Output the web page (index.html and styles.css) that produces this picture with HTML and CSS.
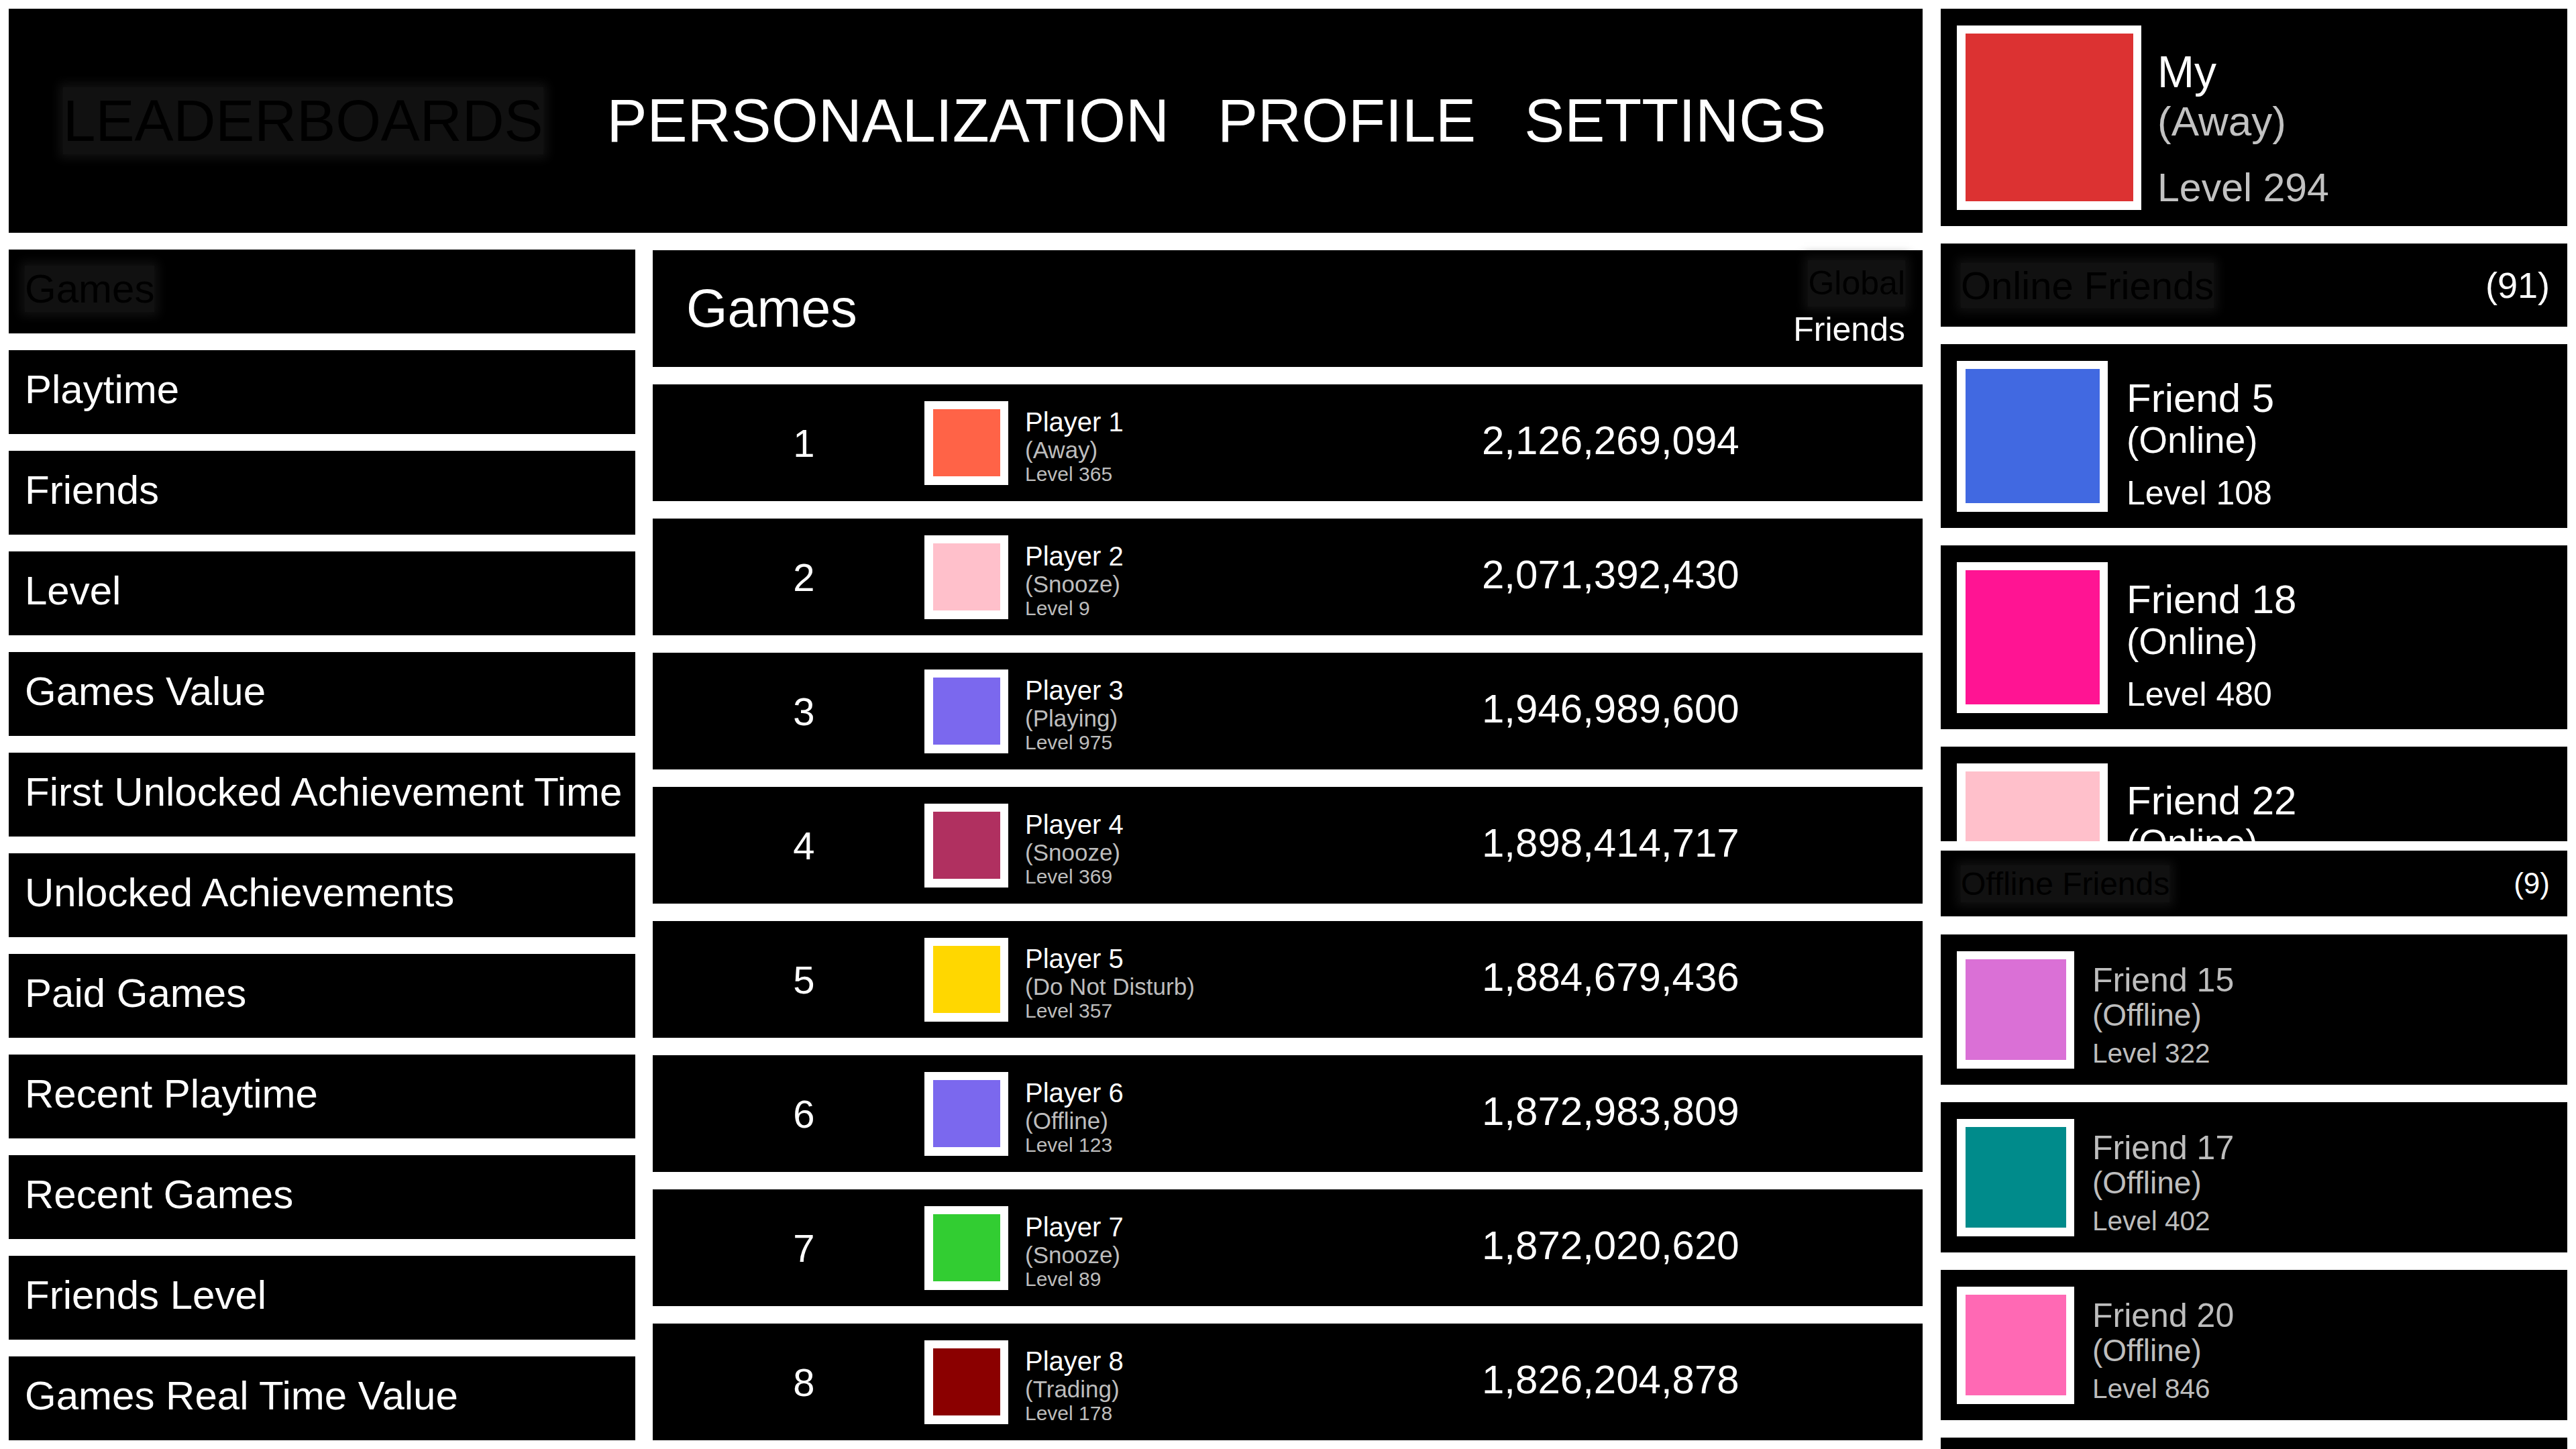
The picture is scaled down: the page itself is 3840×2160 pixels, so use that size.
FILE: index.html
```html
<!DOCTYPE html>
<html lang="en">
<head>
<meta charset="utf-8">
<title>Leaderboards</title>
<link rel="stylesheet" href="styles.css">
</head>
<body>
<div class="app">
  <div class="main">
    <header class="topbar">
      <nav class="tabs">
        <span class="tab active">LEADERBOARDS</span>
        <span class="tab">PERSONALIZATION</span>
        <span class="tab">PROFILE</span>
        <span class="tab">SETTINGS</span>
      </nav>
    </header>
    <div class="content">
      <aside class="categories">
        <div class="cat active"><span class="cat-label">Games</span></div>
        <div class="cat"><span class="cat-label">Playtime</span></div>
        <div class="cat"><span class="cat-label">Friends</span></div>
        <div class="cat"><span class="cat-label">Level</span></div>
        <div class="cat"><span class="cat-label">Games Value</span></div>
        <div class="cat"><span class="cat-label">First Unlocked Achievement Time</span></div>
        <div class="cat"><span class="cat-label">Unlocked Achievements</span></div>
        <div class="cat"><span class="cat-label">Paid Games</span></div>
        <div class="cat"><span class="cat-label">Recent Playtime</span></div>
        <div class="cat"><span class="cat-label">Recent Games</span></div>
        <div class="cat"><span class="cat-label">Friends Level</span></div>
        <div class="cat"><span class="cat-label">Games Real Time Value</span></div>
      </aside>
      <section class="board">
        <div class="board-head">
          <h1 class="board-title">Games</h1>
          <div class="scope">
            <span class="scope-opt active">Global</span>
            <span class="scope-opt">Friends</span>
          </div>
        </div>
        <div class="row">
          <div class="rank">1</div>
          <div class="player">
            <div class="avatar sm"><div class="fill" style="background:#ff6347"></div></div>
            <div class="pinfo"><div class="pname">Player 1</div><div class="pstatus">(Away)</div><div class="plevel">Level 365</div></div>
          </div>
          <div class="score">2,126,269,094</div>
        </div>
        <div class="row">
          <div class="rank">2</div>
          <div class="player">
            <div class="avatar sm"><div class="fill" style="background:#ffc0cb"></div></div>
            <div class="pinfo"><div class="pname">Player 2</div><div class="pstatus">(Snooze)</div><div class="plevel">Level 9</div></div>
          </div>
          <div class="score">2,071,392,430</div>
        </div>
        <div class="row">
          <div class="rank">3</div>
          <div class="player">
            <div class="avatar sm"><div class="fill" style="background:#7b68ee"></div></div>
            <div class="pinfo"><div class="pname">Player 3</div><div class="pstatus">(Playing)</div><div class="plevel">Level 975</div></div>
          </div>
          <div class="score">1,946,989,600</div>
        </div>
        <div class="row">
          <div class="rank">4</div>
          <div class="player">
            <div class="avatar sm"><div class="fill" style="background:#b03060"></div></div>
            <div class="pinfo"><div class="pname">Player 4</div><div class="pstatus">(Snooze)</div><div class="plevel">Level 369</div></div>
          </div>
          <div class="score">1,898,414,717</div>
        </div>
        <div class="row">
          <div class="rank">5</div>
          <div class="player">
            <div class="avatar sm"><div class="fill" style="background:#ffd700"></div></div>
            <div class="pinfo"><div class="pname">Player 5</div><div class="pstatus">(Do Not Disturb)</div><div class="plevel">Level 357</div></div>
          </div>
          <div class="score">1,884,679,436</div>
        </div>
        <div class="row">
          <div class="rank">6</div>
          <div class="player">
            <div class="avatar sm"><div class="fill" style="background:#7b68ee"></div></div>
            <div class="pinfo"><div class="pname">Player 6</div><div class="pstatus">(Offline)</div><div class="plevel">Level 123</div></div>
          </div>
          <div class="score">1,872,983,809</div>
        </div>
        <div class="row">
          <div class="rank">7</div>
          <div class="player">
            <div class="avatar sm"><div class="fill" style="background:#32cd32"></div></div>
            <div class="pinfo"><div class="pname">Player 7</div><div class="pstatus">(Snooze)</div><div class="plevel">Level 89</div></div>
          </div>
          <div class="score">1,872,020,620</div>
        </div>
        <div class="row">
          <div class="rank">8</div>
          <div class="player">
            <div class="avatar sm"><div class="fill" style="background:#8b0000"></div></div>
            <div class="pinfo"><div class="pname">Player 8</div><div class="pstatus">(Trading)</div><div class="plevel">Level 178</div></div>
          </div>
          <div class="score">1,826,204,878</div>
        </div>
      </section>
    </div>
  </div>
  <aside class="side">
    <div class="me">
      <div class="avatar lg"><div class="fill" style="background:#dc3232"></div></div>
      <div class="me-info">
        <div class="me-name">My</div>
        <div class="me-status">(Away)</div>
        <div class="me-level">Level 294</div>
      </div>
    </div>
    <div class="list-head online-head">
      <span class="list-title">Online Friends</span>
      <span class="list-count">(91)</span>
    </div>
    <div class="friends online">
      <div class="friend">
        <div class="avatar md"><div class="fill" style="background:#4169e1"></div></div>
        <div class="finfo"><div class="fname">Friend 5</div><div class="fstatus">(Online)</div><div class="flevel">Level 108</div></div>
      </div>
      <div class="friend">
        <div class="avatar md"><div class="fill" style="background:#ff1493"></div></div>
        <div class="finfo"><div class="fname">Friend 18</div><div class="fstatus">(Online)</div><div class="flevel">Level 480</div></div>
      </div>
      <div class="friend">
        <div class="avatar md"><div class="fill" style="background:#ffc0cb"></div></div>
        <div class="finfo"><div class="fname">Friend 22</div><div class="fstatus">(Online)</div><div class="flevel">Level 213</div></div>
      </div>
    </div>
    <div class="list-head offline-head">
      <span class="list-title">Offline Friends</span>
      <span class="list-count">(9)</span>
    </div>
    <div class="friends offline">
      <div class="friend off">
        <div class="avatar xs"><div class="fill" style="background:#da70d6"></div></div>
        <div class="finfo"><div class="fname">Friend 15</div><div class="fstatus">(Offline)</div><div class="flevel">Level 322</div></div>
      </div>
      <div class="friend off">
        <div class="avatar xs"><div class="fill" style="background:#008b8b"></div></div>
        <div class="finfo"><div class="fname">Friend 17</div><div class="fstatus">(Offline)</div><div class="flevel">Level 402</div></div>
      </div>
      <div class="friend off">
        <div class="avatar xs"><div class="fill" style="background:#ff69b4"></div></div>
        <div class="finfo"><div class="fname">Friend 20</div><div class="fstatus">(Offline)</div><div class="flevel">Level 846</div></div>
      </div>
      <div class="friend off">
        <div class="avatar xs"><div class="fill" style="background:#20b2aa"></div></div>
        <div class="finfo"><div class="fname">Friend 31</div><div class="fstatus">(Offline)</div><div class="flevel">Level 57</div></div>
      </div>
    </div>
  </aside>
</div>
</body>
</html>
```

FILE: styles.css
```css
* { box-sizing: border-box; }
html, body {
  margin: 0;
  padding: 0;
  background: #ffffff;
  height: 2160px;
  overflow: hidden;
}
body {
  font-family: "Liberation Sans", Arial, sans-serif;
  color: #ffffff;
}
.app {
  display: grid;
  grid-template-columns: 1fr 934px;
  column-gap: 27px;
  padding: 13px 13px 0 13px;
  height: 2160px;
}
.main {
  display: flex;
  flex-direction: column;
  gap: 25px;
  min-width: 0;
}
.topbar {
  background: #000;
  height: 334px;
  display: flex;
  align-items: center;
  padding-left: 81px;
}
.tabs {
  display: flex;
  align-items: center;
  gap: 72px;
  font-size: 90px;
  line-height: 100px;
}
.tab { color: #fff; white-space: nowrap; }
.tab.active { font-size: 87px; margin-right: 23px; }
.tab.active,
.cat.active .cat-label,
.scope-opt.active,
.list-title {
  color: #000;
  background: #111;
  box-shadow: 0 0 14px 6px #111;
}
.content {
  display: grid;
  grid-template-columns: 934px 1fr;
  column-gap: 26px;
  flex: 1;
  min-height: 0;
}
.categories {
  display: flex;
  flex-direction: column;
  gap: 25px;
}
.cat {
  background: #000;
  height: 125px;
  display: flex;
  align-items: center;
  padding: 0 0 8px 24px;
  font-size: 60px;
  white-space: nowrap;
}
.board {
  display: flex;
  flex-direction: column;
  gap: 26px;
  padding-top: 1px;
}
.board-head {
  background: #000;
  height: 174px;
  display: flex;
  align-items: center;
  justify-content: space-between;
  padding: 0 26px 0 50px;
}
.board-title {
  margin: 0;
  font-weight: normal;
  font-size: 79px;
}
.scope {
  display: flex;
  flex-direction: column;
  align-items: flex-end;
  font-size: 50px;
  line-height: 69px;
  padding-bottom: 6px;
}
.row {
  background: #000;
  height: 174px;
  display: flex;
  align-items: center;
  padding: 0 24px;
}
.rank {
  width: 381px;
  padding-left: 22px;
  text-align: center;
  font-size: 58px;
}
.player {
  width: 831px;
  display: flex;
  align-items: center;
  gap: 25px;
}
.avatar {
  background: #fff;
  flex: none;
  display: flex;
  align-items: center;
  justify-content: center;
}
.avatar .fill { width: 100%; height: 100%; }
.avatar.sm { width: 125px; height: 125px; padding: 12.5px; }
.avatar.xs { width: 175px; height: 175px; padding: 12.5px; }
.avatar.md { width: 225px; height: 225px; padding: 12.5px; }
.avatar.lg { width: 275px; height: 275px; padding: 12.5px; }
.pinfo {
  display: flex;
  flex-direction: column;
  align-self: flex-start;
  margin-top: 9px;
  white-space: nowrap;
}
.pname { font-size: 40px; line-height: 44px; }
.pstatus { font-size: 35px; line-height: 40px; color: #bdbdbd; }
.plevel { font-size: 30px; line-height: 32px; color: #bdbdbd; }
.score { font-size: 60px; padding-bottom: 7px; }

.side {
  display: flex;
  flex-direction: column;
  min-width: 0;
}
.me {
  background: #000;
  height: 324px;
  display: flex;
  align-items: center;
  padding-left: 24px;
  gap: 24px;
}
.me-info {
  display: flex;
  flex-direction: column;
  align-self: flex-start;
  margin-top: 57px;
}
.me-name { font-size: 66px; line-height: 74px; }
.me-status { font-size: 62px; line-height: 74px; color: #c2c2c2; }
.me-level { font-size: 59px; line-height: 74px; color: #c2c2c2; margin-top: 25px; }

.list-head {
  background: #000;
  display: flex;
  align-items: center;
  justify-content: space-between;
  padding: 0 26px 0 30px;
}
.online-head { height: 124px; margin-top: 26px; }
.offline-head { height: 98px; margin-top: 14px; }
.online-head .list-title { font-size: 58px; }
.online-head .list-count { font-size: 54px; }
.offline-head .list-title { font-size: 48px; }
.offline-head .list-count { font-size: 44px; }

.friends {
  display: flex;
  flex-direction: column;
  gap: 26px;
  overflow: hidden;
  flex: none;
}
.friends.online { margin-top: 26px; height: 741px; }
.friends.offline { margin-top: 27px; overflow: visible; }
.friend {
  background: #000;
  display: flex;
  align-items: center;
  padding-left: 24px;
  gap: 28px;
  flex: none;
}
.friends.online .friend { height: 274px; }
.friend.off { height: 224px; gap: 27px; }
.finfo {
  display: flex;
  flex-direction: column;
  align-self: flex-start;
  white-space: nowrap;
}
.friends.online .finfo { margin-top: 50px; }
.friends.online .fname { font-size: 60px; line-height: 62px; }
.friends.online .fstatus { font-size: 55px; line-height: 62px; }
.friends.online .flevel { font-size: 50px; line-height: 62px; margin-top: 17px; }
.friend.off .finfo { color: #bdbdbd; margin-top: 42px; }
.friend.off .fname { font-size: 50px; line-height: 52px; }
.friend.off .fstatus { font-size: 46px; line-height: 52px; }
.friend.off .flevel { font-size: 40.5px; line-height: 52px; margin-top: 5px; }
```
